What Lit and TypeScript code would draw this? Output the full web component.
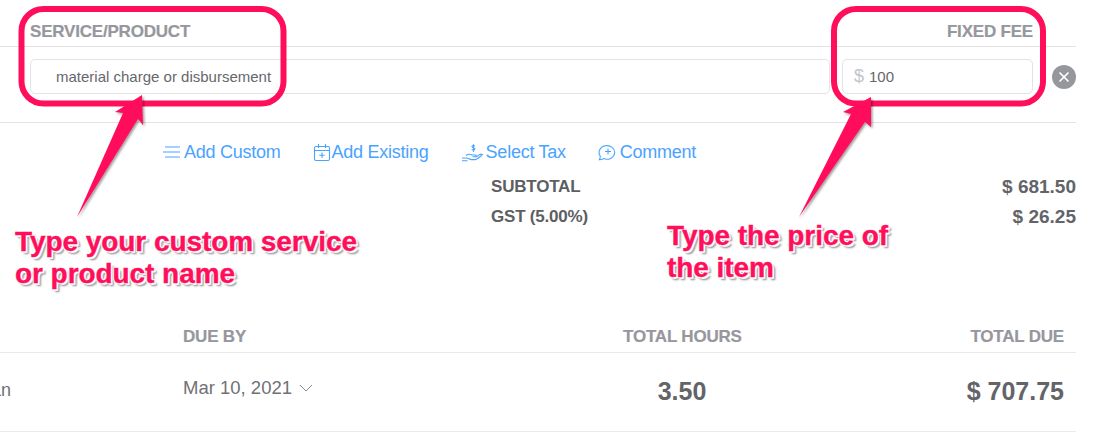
import { LitElement, html, css, svg, unsafeCSS } from "lit";
import { customElement } from "lit/decorators.js";

const PINK = "#ff0f5b";

@customElement("app-root")
export class AppRoot extends LitElement {
  static styles = css`
    :host { display: block; position: relative; width: 1099px; height: 433px; overflow: hidden; background: #fff; font-family: "Liberation Sans", Arial, sans-serif; color: #5f6064; }
    .page { width: 1076px; display: flex; flex-direction: column; }
    .label { font-size: 17px; font-weight: 700; color: #96979d; letter-spacing: -0.2px; line-height: 18px; white-space: nowrap; -webkit-text-stroke: 0.2px #96979d; }
    .head { height: 47px; box-sizing: border-box; border-bottom: 1px solid #e3e3e6; display: flex; justify-content: space-between; align-items: flex-end; padding: 0 43px 5px 30px; }
    .inputs { height: 76px; box-sizing: border-box; border-bottom: 1px solid #e3e3e6; display: flex; align-items: flex-start; padding: 12px 0 0 30px; gap: 12px; }
    .box { height: 35px; box-sizing: border-box; border: 1px solid #e2e3e8; border-radius: 5px; display: flex; align-items: center; font-size: 15px; color: #66676b; }
    .name { width: 800px; padding-left: 25px; }
    .fee { width: 191px; padding-left: 11px; gap: 5px; }
    .dollar { color: #c2c4ca; font-size: 18px; font-weight: 400; }
    .remove { width: 24px; height: 24px; border-radius: 50%; background: #96979d; margin: 6px 0 0 7px; display: flex; align-items: center; justify-content: center; }
    .actions { height: 58px; display: flex; align-items: center; padding-left: 162px; color: #4aa3ff; font-size: 18px; letter-spacing: -0.25px; box-sizing: border-box; }
    .action { display: flex; align-items: center; margin-right: 31px; }
    .action svg { display: block; fill: none; stroke: #4aa3ff; stroke-width: 1.1; }
    .existing { margin-left: 1px; }
    .tax { margin-left: 1px; }
    .comment { margin-left: 1px; }
    .icon-gap { margin-left: 2px; }
    .summary { display: grid; grid-template-columns: 1fr auto; padding-left: 491px; font-weight: 700; margin-top: -2px; }
    .summary > div { height: 31px; line-height: 16px; }
    .first { margin-bottom: -1px; }
    .sum-label { font-size: 17px; letter-spacing: -0.2px; color: #5d5e62; }
    .sum-value { font-size: 19px; text-align: right; color: #636468; }
    .table-head { margin-top: 73px; height: 40px; display: grid; grid-template-columns: 183px 440px 118px 1fr; align-items: end; border-bottom: 1px solid #e8e9f0; padding: 0 12px 6px 0; box-sizing: border-box; }
    .row { height: 79px; display: grid; grid-template-columns: 183px 440px 118px 1fr; align-items: center; border-bottom: 1px solid #eaebef; padding: 0 12px 0 0; box-sizing: border-box; }
    .th-hours { text-align: center; }
    .th-due { text-align: right; }
    .who { font-size: 18px; color: #707175; margin-left: -14px; margin-top: -3px; }
    .date { font-size: 18.5px; color: #707175; display: flex; align-items: center; gap: 7px; margin-top: -9px; }
    .hours { font-size: 25px; font-weight: 700; text-align: center; color: #636468; margin-top: -2px; }
    .due { font-size: 25px; font-weight: 700; text-align: right; color: #636468; margin-top: -2px; }
    .overlay { position: absolute; left: 0; top: 0; pointer-events: none; }
    .note { position: absolute; color: ${unsafeCSS(PINK)}; font-size: 28px; font-weight: 700; line-height: 32px; white-space: nowrap; -webkit-text-stroke: 0.4px ${unsafeCSS(PINK)}; text-shadow: -1px -1px 0 #fff, 1px -1px 0 #fff, -1px 1px 0 #fff, 2px 2px 1px #fff, 3px 3px 2px #808080; letter-spacing: -0.06px; }
    .note-a { left: 15px; top: 226px; }
    .note-b { left: 667px; top: 220px; }
  `;

  render() {
    return html`
      <div class="page">
        <div class="head"><span class="label">SERVICE/PRODUCT</span><span class="label">FIXED FEE</span></div>
        <div class="inputs">
          <div class="box name">material charge or disbursement</div>
          <div class="box fee"><span class="dollar">$</span><span>100</span></div>
          <div class="remove">
            <svg width="12" height="12" viewBox="0 0 12 12"><path d="M2 2l8 8M10 2l-8 8" stroke="#fff" stroke-width="1.7" stroke-linecap="round"/></svg>
          </div>
        </div>
        <div class="actions">
          <div class="action">
            <svg width="22" height="16" viewBox="0 0 22 16"><path d="M3 3h15M1 8h17M3 13h15"/></svg>Add Custom
          </div>
          <div class="action existing">
            <svg width="19" height="19" viewBox="0 0 19 19"><rect x="1.500" y="3.500" width="15" height="14" rx="1.500"/><path d="M1.500 7.500h15M5.500 1v4M12.500 1v4M9 9.500v5.500M6.300 12.300h5.400"/></svg>Add Existing
          </div>
          <div class="action tax">
            <svg width="23" height="19" viewBox="0 0 23 19"><path d="M1 15h4.500c2 0 3 1.600 5 1.600h3.500c2 0 5-3 7.500-5-1.200-.8-2.400-.5-3.500.3l-2.500 1.800h-4M1 17.800h5.500M5 12.500c2-1.500 4-1.500 6-.5h3.300c1.200 0 1.200 1.700 0 1.700"/><path d="M13.800 3.200c-.4-.9-2.800-1-2.800.3 0 1.500 2.900.9 2.900 2.400 0 1.300-2.500 1.300-3.100.3M12.500 1.200v7.800"/></svg><span class="icon-gap">Select Tax</span>
          </div>
          <div class="action comment">
            <svg width="20" height="18" viewBox="0 0 20 18"><path d="M2.200 13a7.800 6.800 0 1 1 3.300 2.600c-1.100.8-2.700 1.200-4.200 1.200.7-1 1.100-2.500.9-3.800z"/><path d="M10 5.500v6M7 8.500h6"/></svg><span class="icon-gap">Comment</span>
          </div>
        </div>
        <div class="summary">
          <div class="sum-label first">SUBTOTAL</div><div class="sum-value first">$ 681.50</div>
          <div class="sum-label">GST (5.00%)</div><div class="sum-value">$ 26.25</div>
        </div>
        <div class="table-head">
          <span></span>
          <span class="label">DUE BY</span>
          <span class="label th-hours">TOTAL HOURS</span>
          <span class="label th-due">TOTAL DUE</span>
        </div>
        <div class="row">
          <span class="who">Ian</span>
          <span class="date">Mar 10, 2021
            <svg width="14" height="8" viewBox="0 0 14 8"><path d="M1 1l6 6 6-6" fill="none" stroke="#8a8b90" stroke-width="1"/></svg>
          </span>
          <span class="hours">3.50</span>
          <span class="due">$ 707.75</span>
        </div>
      </div>
      ${this.annotations()}
      <div class="note note-a">Type your custom service<br />or product name</div>
      <div class="note note-b">Type the price of<br />the item</div>
    `;
  }

  annotations() {
    return html`<svg class="overlay" width="1099" height="433" viewBox="0 0 1099 433">
      <defs><filter id="s" x="-20%" y="-20%" width="140%" height="140%"><feDropShadow dx="1.500" dy="1.500" stdDeviation="1" flood-color="#000" flood-opacity="0.4"/></filter></defs>
      ${svg`
        <rect x="21.500" y="9" width="262" height="94.500" rx="22" fill="none" stroke="${PINK}" stroke-width="6"/>
        <rect x="834" y="9" width="209" height="94.500" rx="22" fill="none" stroke="${PINK}" stroke-width="6"/>
        <path d="M142 95 L143 125 L138 119 L77 217 L123 113 L115 112 Z" fill="${PINK}" filter="url(#s)"/>
        <path d="M871 97 L871 127 L865 122 L799 217 L851 114 L843 112 Z" fill="${PINK}" filter="url(#s)"/>
      `}
    </svg>`;
  }
}
